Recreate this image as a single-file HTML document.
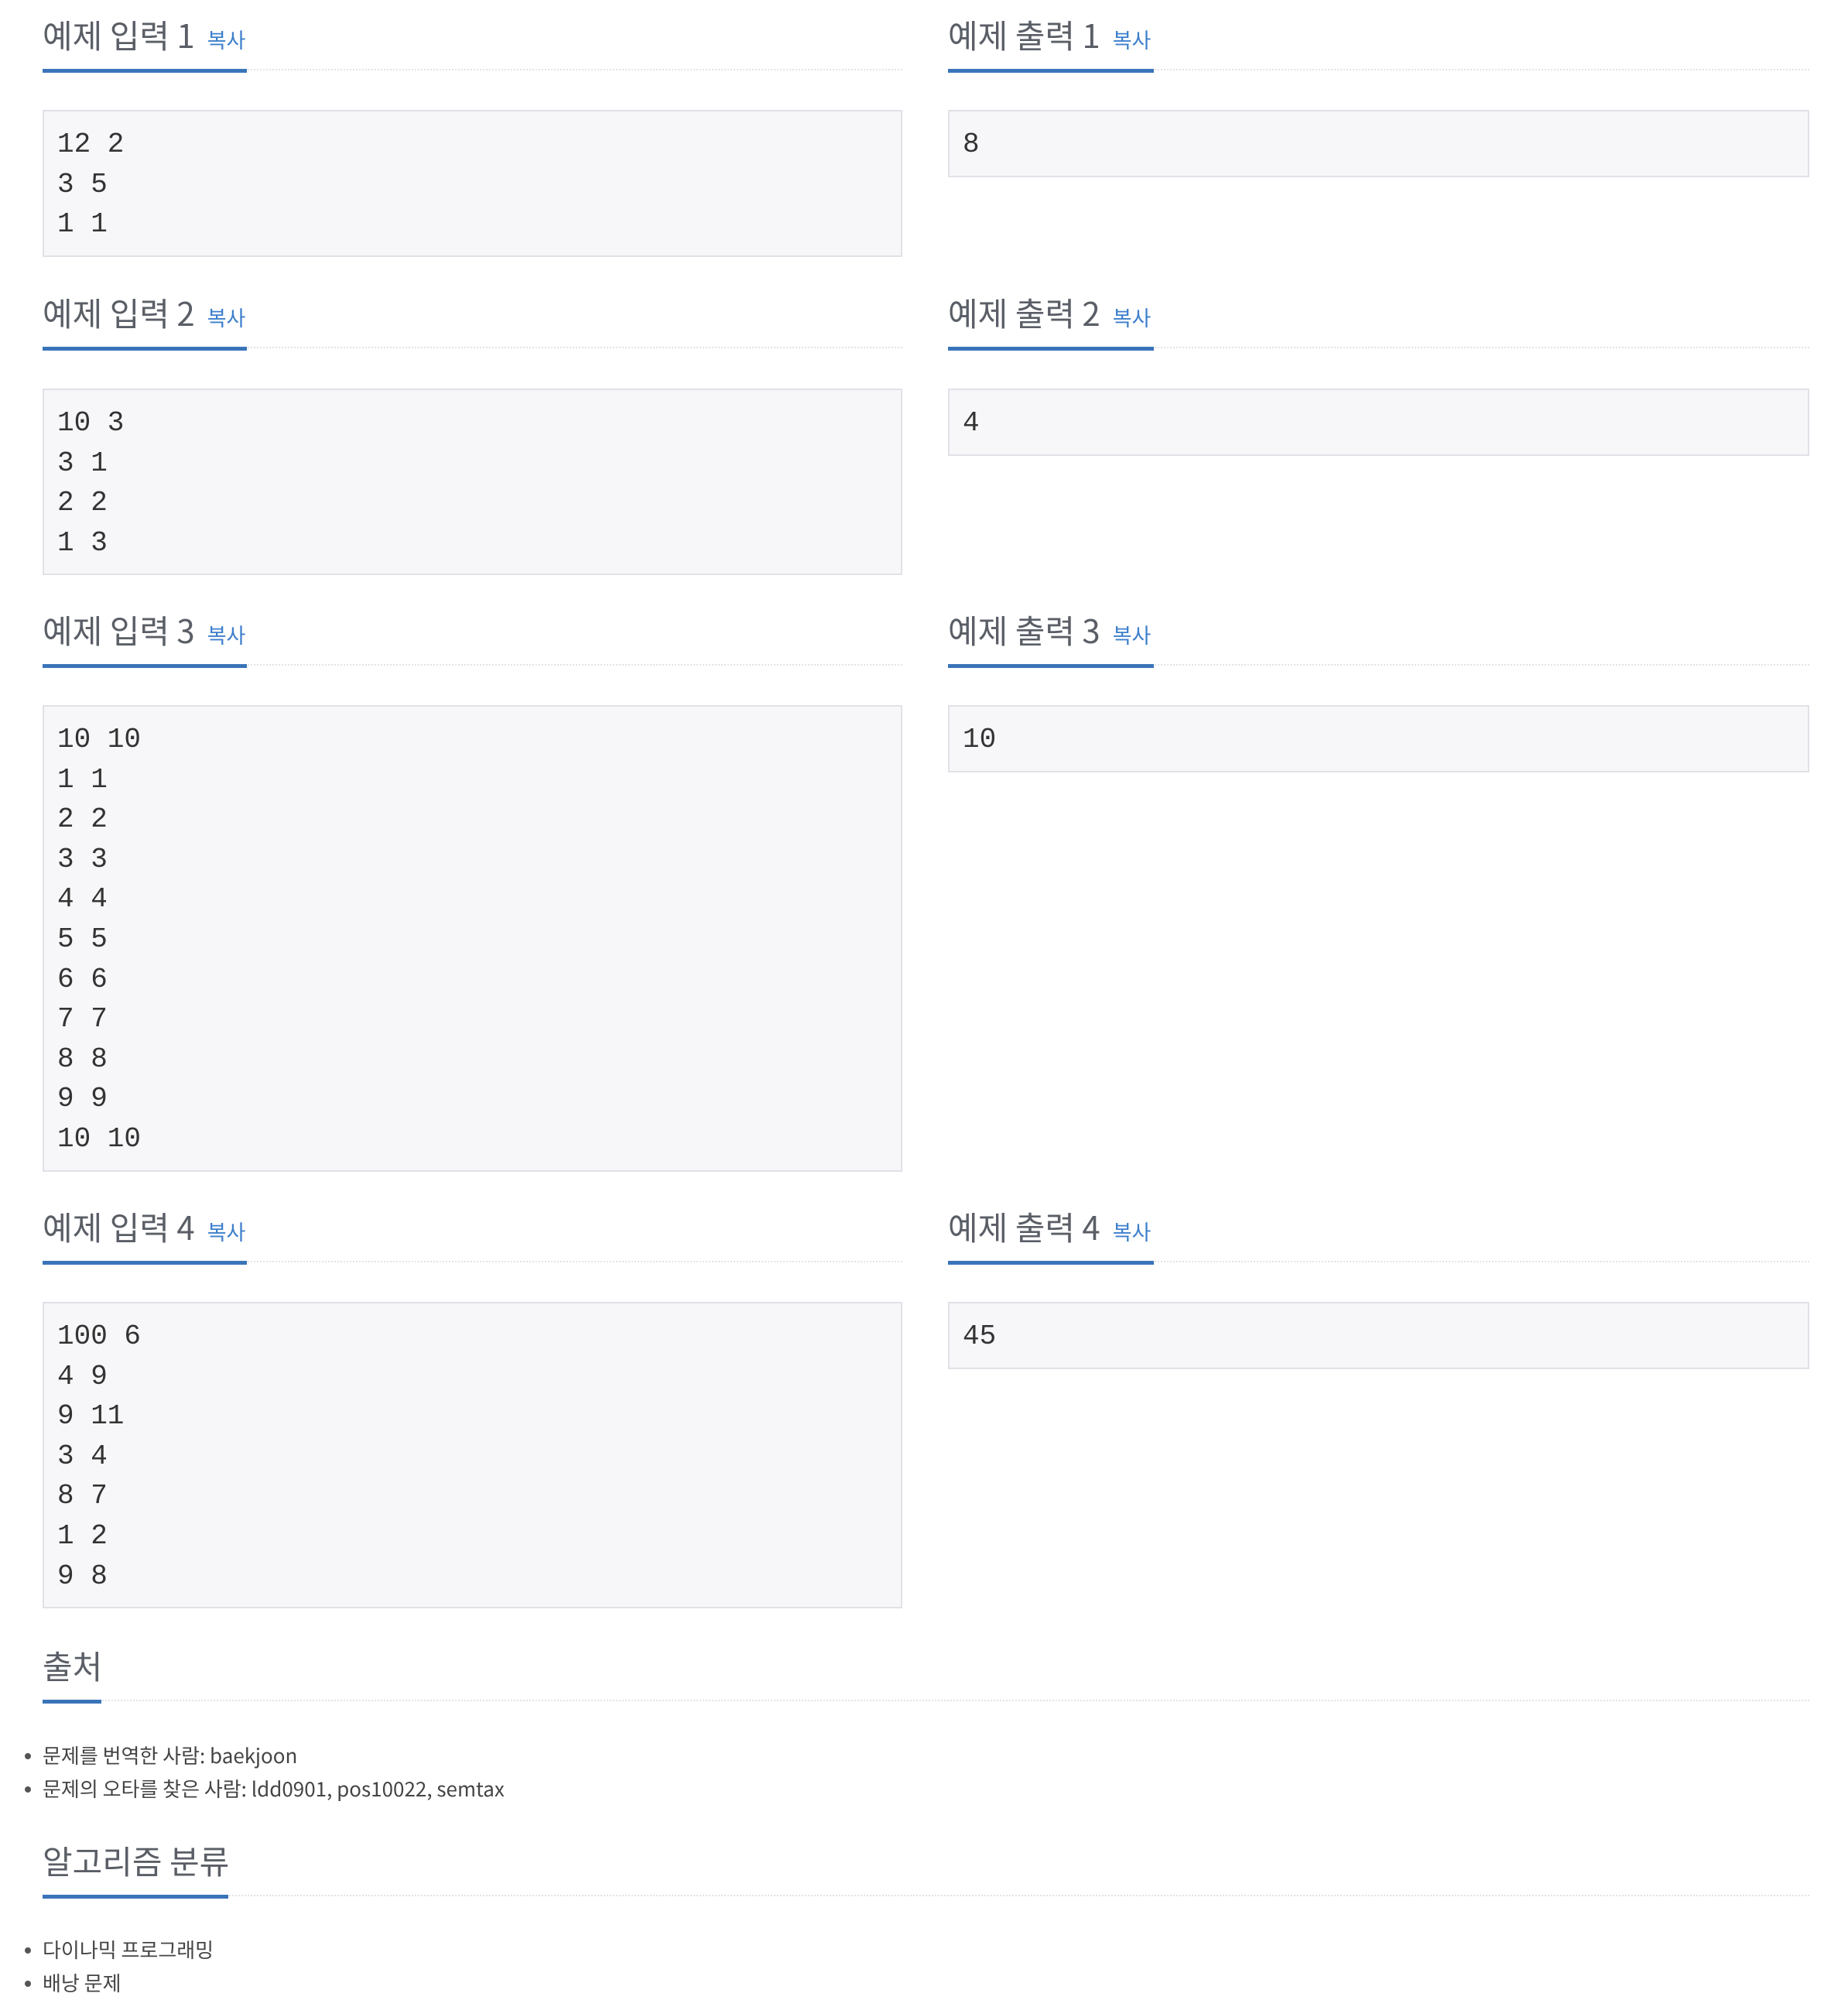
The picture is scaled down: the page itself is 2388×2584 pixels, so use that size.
<!DOCTYPE html>
<html><head><meta charset="utf-8">
<style>
html,body{margin:0;padding:0;background:#fff;}
body{width:2388px;height:2584px;position:relative;overflow:hidden;font-family:"Liberation Sans","Noto Sans CJK KR",sans-serif;}
.t{position:absolute;font-size:42px;line-height:50px;color:#5a5e66;white-space:nowrap;font-family:"Noto Sans CJK KR","Liberation Sans",sans-serif;}
.t span{font-size:27px;color:#3d7fcc;margin-left:16px;}
.bar{position:absolute;height:5px;background:#3a74b9;}
.dot{position:absolute;height:0;border-top:2px dotted #e2e3e8;}
.box{position:absolute;box-sizing:border-box;background:#f7f7f9;border:2px solid #e1e1e8;padding:17px 17px 14px;font-family:"Liberation Mono",monospace;font-size:36px;line-height:51.6px;color:#333;white-space:pre;margin:0;}
.l{left:55px;width:1111px;}
.r{left:1225px;width:1113px;}
.li{position:absolute;left:55px;font-size:26px;line-height:40px;color:#444;white-space:nowrap;font-family:"Noto Sans CJK KR","Liberation Sans",sans-serif;}
.li:before{content:"";position:absolute;left:-23px;top:17px;width:8px;height:8px;border-radius:50%;background:#555;}
</style></head><body>

<div class="t" style="left:55px;top:20px">예제 입력 1<span>복사</span></div>
<div class="dot l" style="top:89px"></div>
<div class="bar" style="left:55px;width:264px;top:89px"></div>
<pre class="box l" style="top:142px">12 2
3 5
1 1</pre>
<div class="t" style="left:1225px;top:20px">예제 출력 1<span>복사</span></div>
<div class="dot r" style="top:89px"></div>
<div class="bar" style="left:1225px;width:266px;top:89px"></div>
<pre class="box r" style="top:142px">8</pre>

<div class="t" style="left:55px;top:379px">예제 입력 2<span>복사</span></div>
<div class="dot l" style="top:448px"></div>
<div class="bar" style="left:55px;width:264px;top:448px"></div>
<pre class="box l" style="top:502px">10 3
3 1
2 2
1 3</pre>
<div class="t" style="left:1225px;top:379px">예제 출력 2<span>복사</span></div>
<div class="dot r" style="top:448px"></div>
<div class="bar" style="left:1225px;width:266px;top:448px"></div>
<pre class="box r" style="top:502px">4</pre>

<div class="t" style="left:55px;top:789px">예제 입력 3<span>복사</span></div>
<div class="dot l" style="top:858px"></div>
<div class="bar" style="left:55px;width:264px;top:858px"></div>
<pre class="box l" style="top:911px">10 10
1 1
2 2
3 3
4 4
5 5
6 6
7 7
8 8
9 9
10 10</pre>
<div class="t" style="left:1225px;top:789px">예제 출력 3<span>복사</span></div>
<div class="dot r" style="top:858px"></div>
<div class="bar" style="left:1225px;width:266px;top:858px"></div>
<pre class="box r" style="top:911px">10</pre>

<div class="t" style="left:55px;top:1560px">예제 입력 4<span>복사</span></div>
<div class="dot l" style="top:1629px"></div>
<div class="bar" style="left:55px;width:264px;top:1629px"></div>
<pre class="box l" style="top:1682px">100 6
4 9
9 11
3 4
8 7
1 2
9 8</pre>
<div class="t" style="left:1225px;top:1560px">예제 출력 4<span>복사</span></div>
<div class="dot r" style="top:1629px"></div>
<div class="bar" style="left:1225px;width:266px;top:1629px"></div>
<pre class="box r" style="top:1682px">45</pre>

<div class="t" style="left:55px;top:2127px">출처</div>
<div class="dot" style="left:55px;width:2283px;top:2196px"></div>
<div class="bar" style="left:55px;width:76px;top:2196px"></div>
<div class="li" style="top:2248px">문제를 번역한 사람: baekjoon</div>
<div class="li" style="top:2291px">문제의 오타를 찾은 사람: ldd0901, pos10022, semtax</div>

<div class="t" style="left:55px;top:2379px">알고리즘 분류</div>
<div class="dot" style="left:55px;width:2283px;top:2448px"></div>
<div class="bar" style="left:55px;width:240px;top:2448px"></div>
<div class="li" style="top:2499px">다이나믹 프로그래밍</div>
<div class="li" style="top:2542px">배낭 문제</div>

</body></html>
